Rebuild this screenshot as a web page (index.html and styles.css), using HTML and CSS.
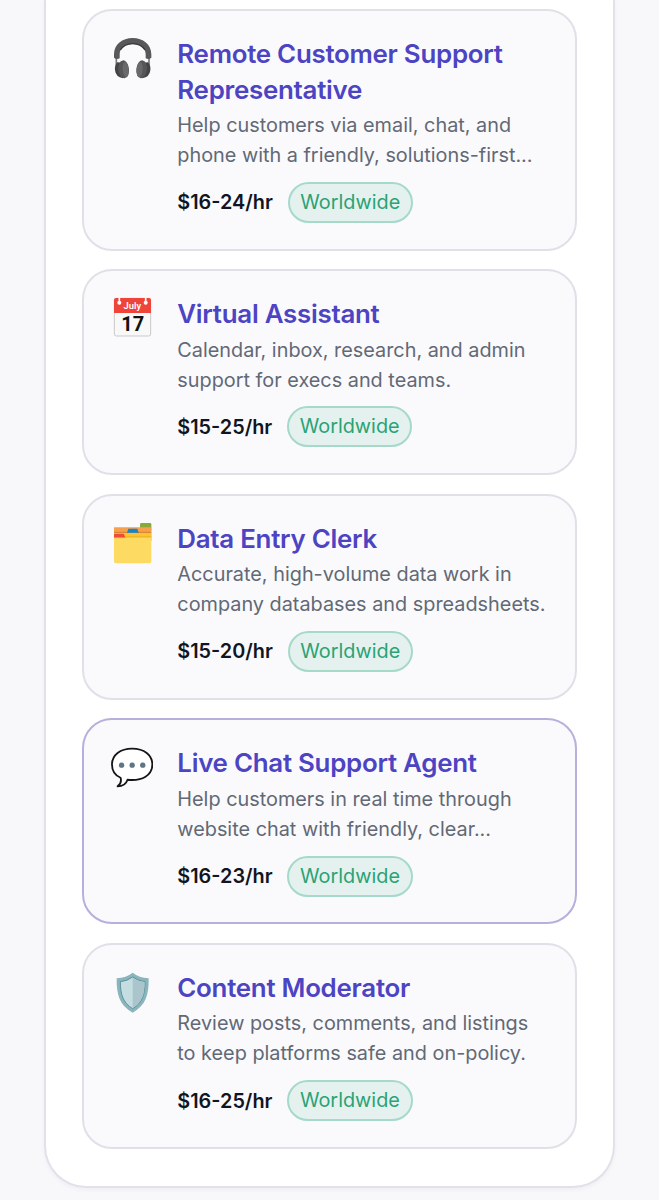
FILE: index.html
```html
<!DOCTYPE html>
<html lang="en">
<head>
<meta charset="utf-8">
<title>Remote jobs</title>
<link rel="stylesheet" href="styles.css">
</head>
<body>
<main class="panel">
  <article class="card">
    <svg class="icon" viewBox="33 36 126 126">
      <path d="M49 98v24M147 98v24" stroke="#77787a" stroke-width="5"/>
      <path d="M42 98V88C42 58 67 39 98 39s56 19 56 49v10q-7 7-17 2V88c0-19-17-31-39-31S59 69 59 88v12q-10 5-17-2z" fill="#58585a"/>
      <path d="M61 75Q73 56 98 56t37 19" fill="none" stroke="#38383a" stroke-width="4"/>
      <path d="M52 112q-9 10-7 24 2 20 24 24l8-46zM144 112q9 10 7 24-2 20-24 24l-8-46z" fill="#444446"/>
      <ellipse cx="71" cy="133" rx="16" ry="27" fill="#555658" transform="rotate(-6 71 133)"/>
      <ellipse cx="125" cy="133" rx="16" ry="27" fill="#555658" transform="rotate(6 125 133)"/>
      <ellipse cx="77" cy="134" rx="9" ry="23" fill="#69696c" transform="rotate(-6 77 134)"/>
      <ellipse cx="119" cy="134" rx="9" ry="23" fill="#69696c" transform="rotate(6 119 134)"/>
    </svg>
    <div class="body">
      <h2 class="title">Remote Customer Support<br>Representative</h2>
      <p class="desc">Help customers via email, chat, and<br>phone with a friendly, solutions-first...</p>
      <div class="meta"><span class="pay">$16-24/hr</span><span class="pill">Worldwide</span></div>
    </div>
  </article>
  <article class="card">
    <svg class="icon" viewBox="33 36 126 126">
      <rect x="43" y="40" width="109" height="113" rx="6" fill="#f8f8f8" stroke="#c9c9cb" stroke-width="3"/>
      <path d="M42 84V45q0-6 6-6h99q6 0 6 6v39z" fill="#ee4439"/>
      <path d="M58 36v14M137 36v14" stroke="#fafafa" stroke-width="5"/>
      <circle cx="58" cy="53" r="6" fill="#fff"/><circle cx="137" cy="53" r="6" fill="#fff"/>
      <text class="month" x="97" y="73">July</text>
      <text class="day" x="98" y="139">17</text>
    </svg>
    <div class="body">
      <h2 class="title">Virtual Assistant</h2>
      <p class="desc">Calendar, inbox, research, and admin<br>support for execs and teams.</p>
      <div class="meta"><span class="pay">$15-25/hr</span><span class="pill">Worldwide</span></div>
    </div>
  </article>
  <article class="card">
    <svg class="icon" viewBox="33 36 126 126">
      <path d="M120 55V43q0-4 4-4h26q4 0 4 4v20h-34z" fill="#8aa93b"/>
      <path d="M42 52h112v40H42z" fill="#f6a04b"/>
      <path d="M42 65h112v5H42z" fill="#d98636"/>
      <path d="M42 69h112v24H42z" fill="#fcc52b"/>
      <path d="M81 68l4-12h27l4 12z" fill="#1684c9"/>
      <path d="M42 84V73q0-2 3-2h26l6 13z" fill="#ef4b36"/>
      <path d="M42 83h112v71q0 6-6 6H48q-6 0-6-6z" fill="#fddb62"/>
      <path d="M43 83h31l6-3h74" fill="none" stroke="#e5ad28" stroke-width="2"/>
    </svg>
    <div class="body">
      <h2 class="title">Data Entry Clerk</h2>
      <p class="desc">Accurate, high-volume data work in<br>company databases and spreadsheets.</p>
      <div class="meta"><span class="pay">$15-20/hr</span><span class="pill">Worldwide</span></div>
    </div>
  </article>
  <article class="card active">
    <svg class="icon" viewBox="34 33 127 127">
      <path d="M98 41C62 41 37 60 37 89c0 20 9 33 26 40 3 10-1 20-9 26 16 0 26-8 30-20 45 5 75-14 75-46 0-29-25-48-61-48z" fill="#fff" stroke="#141516" stroke-width="5.5" stroke-linejoin="round"/>
      <g fill="#5c7783"><circle cx="66" cy="91" r="8"/><circle cx="98" cy="91" r="8"/><circle cx="130" cy="91" r="8"/></g>
    </svg>
    <div class="body">
      <h2 class="title">Live Chat Support Agent</h2>
      <p class="desc">Help customers in real time through<br>website chat with friendly, clear...</p>
      <div class="meta"><span class="pay">$16-23/hr</span><span class="pill">Worldwide</span></div>
    </div>
  </article>
  <article class="card">
    <svg class="icon" viewBox="33 33 126 126">
      <path d="M98 38q19 15 48 17c1 49-9 82-48 103C59 137 49 104 50 55q29-2 48-17z" fill="#8bb5bd"/>
      <path d="M98 51q16 12 37 14c0 38-8 64-37 81-29-17-37-43-37-81q21-2 37-14z" fill="#c4dde1" stroke="#5c919c" stroke-width="3"/>
      <path d="M98 54q16 11 36 12c0 37-8 61-36 78z" fill="#aac6cc"/>
    </svg>
    <div class="body">
      <h2 class="title">Content Moderator</h2>
      <p class="desc">Review posts, comments, and listings<br>to keep platforms safe and on-policy.</p>
      <div class="meta"><span class="pay">$16-25/hr</span><span class="pill">Worldwide</span></div>
    </div>
  </article>
</main>
</body>
</html>
```
FILE: styles.css
```css
* { box-sizing: border-box; }
body {
  margin: 0;
  height: 1200px;
  overflow: hidden;
  background: #f8f8fb;
  font-family: Inter, "Liberation Sans", sans-serif;
}
.panel {
  width: 571px;
  height: 1187.5px;
  margin: 0 0 0 44px;
  padding: 9px 36.4px 0 36px;
  display: flex;
  flex-direction: column;
  gap: 18.6px;
  background: #fff;
  border: 2px solid #e2e1e9;
  border-top: 0;
  border-radius: 0 0 42px 42px;
  box-shadow: 0 2px 4px rgba(20, 20, 60, .04);
}
.card {
  display: flex;
  flex: none;
  gap: 24.3px;
  height: 206px;
  padding: 25px 26px 26px 27px;
  background: #fafafd;
  border: 2px solid #e1e0e8;
  border-radius: 30px;
}
.card:first-child { height: 241.5px; }
.active { border-color: #b5b0dc; }
.icon { flex: none; width: 42px; height: 42px; margin-top: 1px; }
.body { white-space: nowrap; }
.title {
  margin: 0;
  color: #4c44c2;
  font-size: 25.9px;
  font-weight: 600;
  line-height: 35.6px;
  letter-spacing: -.27px;
}
.desc {
  margin: 2.9px 0 0;
  color: #626975;
  font-size: 19.85px;
  line-height: 30px;
}
.meta {
  display: flex;
  align-items: center;
  gap: 14.8px;
  margin-top: 11.8px;
}
.pay {
  color: #111522;
  font-size: 19.85px;
  font-weight: 600;
}
.pill {
  height: 41px;
  padding: 0 10.7px;
  color: #2aa374;
  background: #e5f1ee;
  border: 2px solid #a5d9c8;
  border-radius: 21px;
  font-size: 19.85px;
  line-height: 36px;
}
.month, .day { text-anchor: middle; font-family: Roboto, sans-serif; }
.month { fill: #fff; font-size: 28px; font-weight: 600; }
.day { fill: #111; font-size: 60px; font-weight: 700; }
```
